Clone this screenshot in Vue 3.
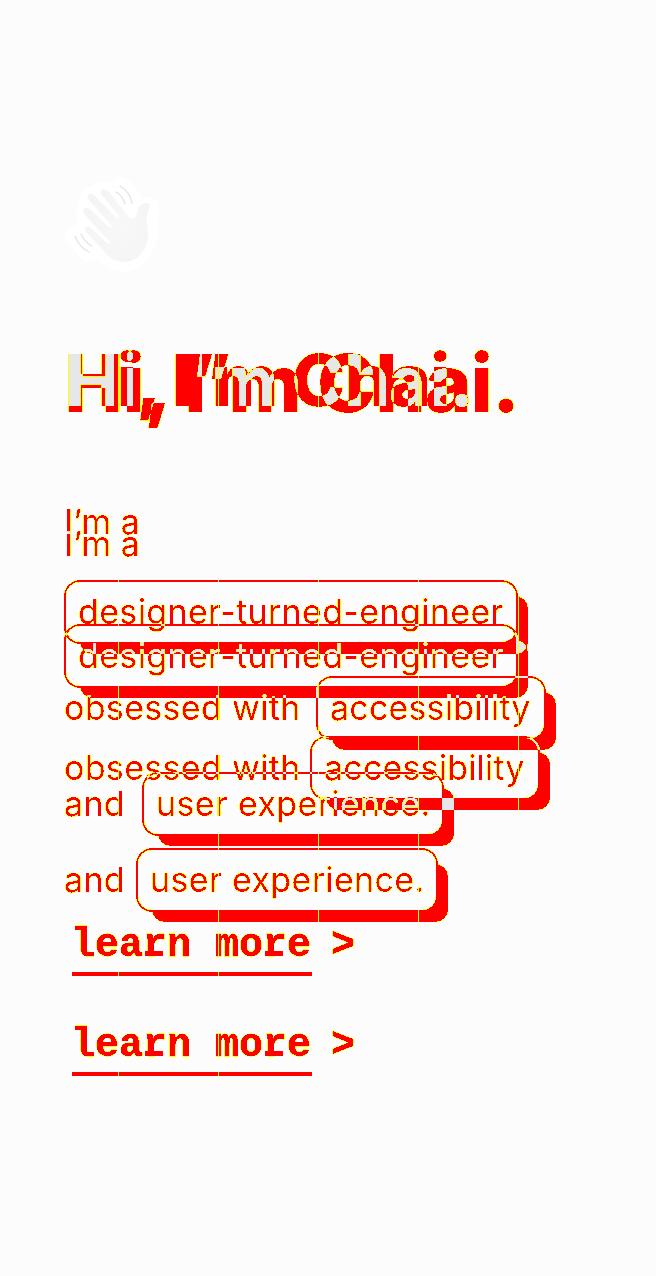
<script setup>
const layers = ['first', 'second']
</script>

<template>
  <main class="page">
    <svg class="defs" width="0" height="0" aria-hidden="true">
      <filter id="diff" x="0" y="0" width="100%" height="100%" color-interpolation-filters="sRGB">
        <feComponentTransfer>
          <feFuncR type="discrete" tableValues="0.908 0.908 0.908 0.908 0.908 1 1 1 1 1 1 1 1 1 1 0.99" />
          <feFuncG type="discrete" tableValues="0.908 0.908 0.908 0.908 0.908 1 1 0 0 0 1 1 1 1 1 0.99" />
          <feFuncB type="discrete" tableValues="0.908 0.908 0.908 0.908 0.908 0 0 0 0 0 0 0 0 0 0 0.99" />
        </feComponentTransfer>
      </filter>
    </svg>

    <div class="compare">
      <section v-for="name in layers" :key="name" class="layer" :class="name">
        <h1>Hi, I’m Chai.</h1>
        <div class="intro">
          <p class="row lead">I’m a</p>
          <p class="row"><span class="card designer">designer-turned-engineer</span></p>
          <p class="row"><span class="label obsessed">obsessed with</span><span class="card access">accessibility</span></p>
          <p class="row"><span class="label and">and</span><span class="card ux">user experience.</span></p>
        </div>
        <div class="more"><a>lea<i>r</i>n mo<i>r</i>e</a><span>&gt;</span></div>
      </section>
      <div class="seams"></div>
    </div>

    <div class="sticker">
      <svg width="130" height="120" viewBox="0 0 130 120" fill="none">
        <defs>
          <radialGradient id="skin" cx="0.6" cy="0.55" r="0.6">
            <stop offset="0" stop-color="#f8f8f8" />
            <stop offset="1" stop-color="#f4f4f4" />
          </radialGradient>
        </defs>
        <g stroke="#fff" stroke-width="20" stroke-linecap="round" stroke-linejoin="round">
          <path fill="#fff" d="M25 71L39 87M31 69L42 81M66 27L75 39M70 22Q80 28 82 38M41 32L54 26L79 54L99 42L98 72Q91 92 76 97Q62 96 50 83L38 66L36 48Z" />
        </g>
        <path fill="url(#skin)" d="M36 67C33 62 38 60 42 64L57 78C60 80 61 79 59 76L35 50C30 43 36 41 41 45L59 62C62 64 63 62 60 59L39 35C35 29 41 26 45 31L66 52C68 54 70 53 68 50L52 30C48 24 55 23 59 27L78 51C82 56 86 53 87 48C88 41 93 37 98 38C102 40 98 45 97 49C96 55 98 62 98 69C98 84 88 96 76 97C67 98 59 93 53 85Z" />
        <path stroke="#e5e5e5" stroke-width="1.3" stroke-linecap="round" d="M66 27Q73 31 75 39M70 21Q80 27 82 38M25 71Q29 82 39 87M31 69Q35 78 42 81" />
      </svg>
    </div>
  </main>
</template>

<style>
body {
  background: #fcfcfc;
}
</style>

<style scoped>
.page,
.compare {
  display: grid;
  grid-template-columns: 656px;
  grid-template-rows: 1276px;
}
.page > *,
.compare > * {
  grid-area: 1 / 1;
}
.compare {
  isolation: isolate;
  filter: url(#diff);
}
.layer {
  box-sizing: border-box;
  padding: 330px 0 0 64px;
  background: #fff;
  color: #808080;
  mix-blend-mode: multiply;
  font-family: Inter, "Liberation Sans", sans-serif;
}
h1 {
  margin: 0;
  height: 100px;
  line-height: 100px;
  font-size: 72px;
  font-weight: 800;
  letter-spacing: -0.016em;
  white-space: nowrap;
}
.second h1 {
  font-size: 80px;
  line-height: 106px;
}
.intro {
  margin-top: 60px;
  font-size: 34px;
  font-weight: 400;
  font-optical-sizing: none;
}
.second .intro {
  margin-top: 82px;
}
.row {
  display: flex;
  align-items: flex-start;
  margin: 0;
  height: 64px;
  line-height: 64px;
  margin-bottom: 32px;
  white-space: nowrap;
}
.first .lead {
  margin-bottom: 26px;
}
.second .row {
  margin-bottom: 48px;
}
.obsessed {
  width: 252px;
  letter-spacing: 0.33px;
}
.and {
  width: 78px;
  letter-spacing: 0.33px;
}
.second .obsessed {
  width: 246px;
}
.second .and {
  width: 72px;
}
.card {
  box-sizing: border-box;
  height: 64px;
  line-height: 60px;
  padding: 0 12px;
  border: 2px solid #808080;
  border-radius: 16px;
  background: #fff;
  box-shadow: 13px 13px 0 -3px #808080;
}
.designer {
  width: 454px;
  letter-spacing: 0.36px;
}
.access {
  width: 230px;
  letter-spacing: 0.18px;
}
.ux {
  width: 302px;
  letter-spacing: 0.35px;
}
.more {
  display: flex;
  gap: 20px;
  margin: 84px 0 0 8px;
  font: 700 40px/52px "Liberation Mono", monospace;
  text-indent: -1px;
  -webkit-text-stroke: 0.6px #808080;
}
.second .more {
  margin-top: 108px;
}
.more a {
  width: 240px;
  height: 52px;
  border-bottom: 4px solid #808080;
}
.more i {
  position: relative;
  font-style: normal;
}
.more i::after {
  content: "";
  position: absolute;
  left: 2px;
  bottom: 12px;
  width: 18px;
  height: 5px;
  background: #808080;
}
.seams {
  background: repeating-linear-gradient(90deg, #000 0 18px, #bfbfbf 18px 19px, #000 19px 100px);
  mix-blend-mode: lighten;
}
.sticker {
  position: relative;
  z-index: 1;
  padding: 165px 0 0 50px;
}
.sticker svg {
  display: block;
}
</style>
